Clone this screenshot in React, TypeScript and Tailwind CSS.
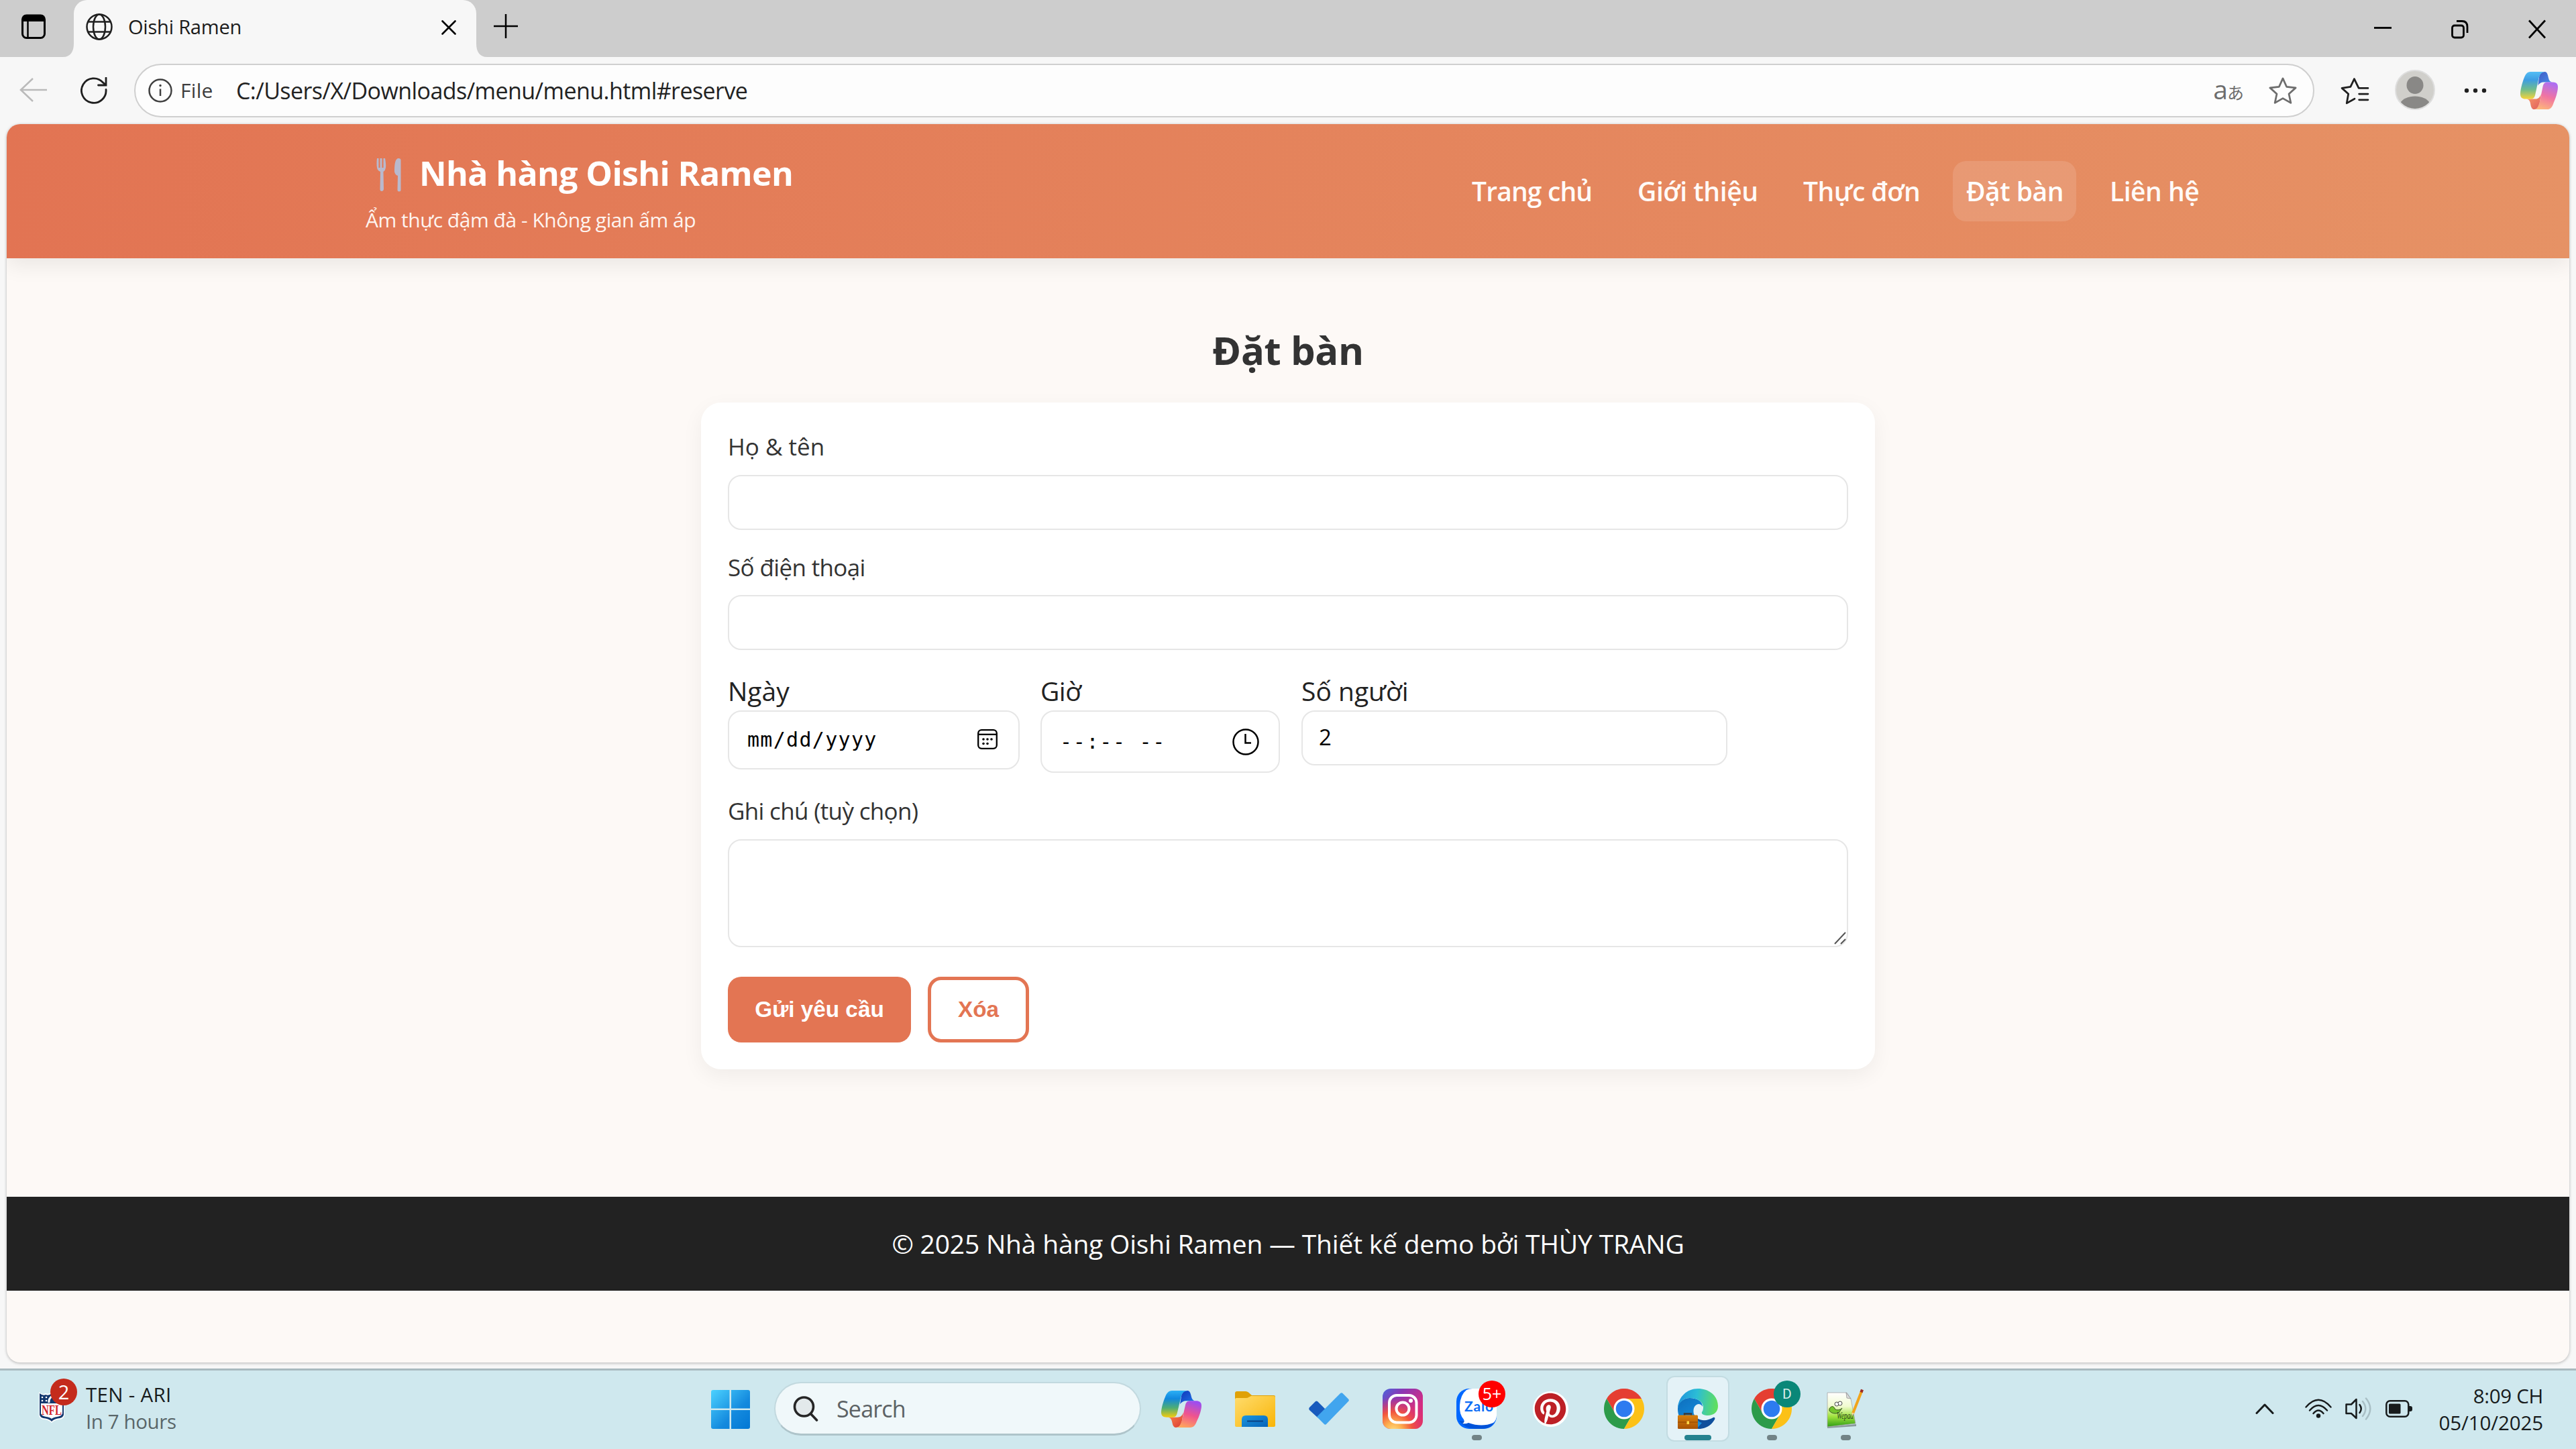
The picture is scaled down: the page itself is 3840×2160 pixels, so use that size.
import type { ReactNode } from "react";
import { FaPinterest } from "react-icons/fa";

const NAV = [
  { label: "Trang chủ", cls: "w-[177px] tracking-[-0.85px]" },
  { label: "Giới thiệu", cls: "w-[177px] tracking-[-0.4px]" },
  { label: "Thực đơn", cls: "w-[173px] tracking-[-0.55px]" },
  { label: "Đặt bàn", cls: "w-[144px] tracking-[-0.5px]", active: true },
  { label: "Liên hệ", cls: "w-[130px] tracking-[-0.5px]" },
];

/* ---------- icons ---------- */

function Copilot({ className, id }: { className: string; id: string }) {
  return (
    <svg viewBox="0 0 60 54" preserveAspectRatio="none" className={className}>
      <defs>
        <linearGradient id={`${id}a`} x1="0" y1="0" x2="0" y2="1">
          <stop offset="0" stopColor="#2cb0f5" />
          <stop offset="0.3" stopColor="#1188de" />
          <stop offset="0.65" stopColor="#4fae73" />
          <stop offset="1" stopColor="#f6cb0c" />
        </linearGradient>
        <linearGradient id={`${id}b`} x1="0" y1="0" x2="1" y2="1">
          <stop offset="0" stopColor="#1133b8" />
          <stop offset="1" stopColor="#1f7cec" />
        </linearGradient>
        <linearGradient id={`${id}c`} x1="0.6" y1="0" x2="0.3" y2="1">
          <stop offset="0" stopColor="#9d4df0" />
          <stop offset="0.5" stopColor="#f0548d" />
          <stop offset="1" stopColor="#ffa75c" />
        </linearGradient>
        <linearGradient id={`${id}d`} x1="0" y1="0" x2="1" y2="1">
          <stop offset="0" stopColor="#ff8a4a" />
          <stop offset="1" stopColor="#d93a36" />
        </linearGradient>
      </defs>
      <path d="M30 8C31 3 34 0 39 0C43 0 44 5 45 9C46 13 48 15 52 15H38C33 15 30 17 28 20Z" fill={`url(#${id}b)`} />
      <path d="M14 39H24C29 39 31 37 33 32L31 44C29 51 27 54 22 54C18 54 17 50 16 45C15 41 13 39 9 39Z" fill={`url(#${id}d)`} />
      <path d="M39 0H16C11 0 8 4 6 9C3 16 0 26 0 32C0 37 3 39 8 39H17C21 39 23 37 24 32L29 11C31 4 33 1 39 0Z" fill={`url(#${id}a)`} />
      <path d="M22 54H43C49 54 51 50 53 45C57 37 60 28 60 22C60 17 57 15 52 15H43C39 15 37 17 36 21L31 43C29 50 27 54 22 54Z" fill={`url(#${id}c)`} />
    </svg>
  );
}

function Chrome({ className }: { className: string }) {
  return (
    <svg viewBox="0 0 60 60" className={className}>
      <path d="M4 15A30 30 0 0 1 56 15H30L17 37.5Z" fill="#e53e32" />
      <path d="M4 15A30 30 0 0 0 30 60L43 37.5A15 15 0 0 1 17 37.5Z" fill="#2c9b4a" />
      <path d="M56 15A30 30 0 0 1 30 60L43 37.5A15 15 0 0 0 30 15Z" fill="#fcc117" />
      <circle cx="30" cy="30" r="15.5" fill="#fff" />
      <circle cx="30" cy="30" r="12.3" fill="#2d7bf0" />
    </svg>
  );
}

function Edge() {
  return (
    <svg viewBox="0 0 60 60" className="size-[60px]">
      <defs>
        <linearGradient id="edgeTop" x1="0" y1="0.4" x2="1" y2="0.5">
          <stop offset="0" stopColor="#1f94dc" />
          <stop offset="0.45" stopColor="#2bbdd6" />
          <stop offset="1" stopColor="#62e05a" />
        </linearGradient>
        <linearGradient id="edgeMid" x1="0" y1="0" x2="0.6" y2="1">
          <stop offset="0" stopColor="#0f6fbd" />
          <stop offset="1" stopColor="#1490df" />
        </linearGradient>
        <linearGradient id="edgeBag" x1="0" y1="0" x2="0" y2="1">
          <stop offset="0" stopColor="#d77f0c" />
          <stop offset="1" stopColor="#a75204" />
        </linearGradient>
      </defs>
      <path d="M24 38C28 48 42 50 53 43C55 42 56 44 55 46C50 55 41 60 31 60C20 60 12 52 14 40Z" fill="#0f4f9c" />
      <path d="M0 30C0 21 8 14 18 14C29 14 37 19 37 27C35 23 31 22 28 24C23 27 23 33 24 38C26 46 32 50 36 51L28 60C12 60 0 47 0 30Z" fill="url(#edgeMid)" />
      <path d="M0 29C1 12 14 0 30 0C48 0 60 12 60 26C60 35 53 40 45 40C38 40 35 38 36 35C38 32 38 30 38 27C37 19 29 14 18 14C9 14 2 20 0 29Z" fill="url(#edgeTop)" />
      <path d="M10 40V37.500H20V40" fill="none" stroke="#3a3a3a" strokeWidth="2.500" />
      <rect x="0" y="39.500" width="30" height="20.500" rx="1.500" fill="url(#edgeBag)" />
      <path d="M0 50H30" stroke="#8d4503" strokeWidth="1" />
      <rect x="13.500" y="48.500" width="3.500" height="4.500" fill="#ffd84a" />
    </svg>
  );
}

function Folder() {
  return (
    <svg viewBox="0 0 60 53" className="h-[53px] w-[60px]">
      <defs>
        <linearGradient id="fold" x1="0" y1="0" x2="1" y2="1">
          <stop offset="0" stopColor="#ffdc6d" />
          <stop offset="1" stopColor="#f9b508" />
        </linearGradient>
        <linearGradient id="foldBlue" x1="0" y1="0" x2="1" y2="1">
          <stop offset="0" stopColor="#1a97e0" />
          <stop offset="1" stopColor="#0862b8" />
        </linearGradient>
      </defs>
      <path d="M0 14V3Q0 0 3 0H16Q18 0 20 1.500L25 6H58Q60 6 60 8V14Z" fill="#e0a106" />
      <path d="M0 12Q0 10 2 10H16Q19 10 21 8.500L24 7H58Q60 7 60 9V51Q60 53 58 53H2Q0 53 0 51Z" fill="url(#fold)" />
      <path d="M10 53V42Q10 36 16 36H43Q49 36 49 42V53Z" fill="url(#foldBlue)" />
      <path d="M18 44.500H42" stroke="#0a4284" strokeWidth="2" />
    </svg>
  );
}

function Todo() {
  return (
    <svg viewBox="0 0 60 48" className="h-[48px] w-[60px]">
      <path d="M1 22L10 13Q11.500 12 13 13L25 25L13 37L1 26Q-0.500 24 1 22Z" fill="#185abd" />
      <path d="M12 36L47 1Q49 -0.500 50.500 1L59 9.500Q60.500 11 59 13L26 47Q24.500 48.500 23 47Z" fill="#41a5ee" />
    </svg>
  );
}

function Instagram() {
  return (
    <svg viewBox="0 0 60 60" className="size-[60px]">
      <defs>
        <linearGradient id="igBase" x1="0" y1="0" x2="1" y2="0.9">
          <stop offset="0" stopColor="#4a66dc" />
          <stop offset="0.3" stopColor="#8a37b5" />
          <stop offset="0.7" stopColor="#d22c84" />
          <stop offset="1" stopColor="#e0306c" />
        </linearGradient>
        <radialGradient id="igWarm" cx="0.27" cy="1.05" r="0.85">
          <stop offset="0" stopColor="#ffdd80" />
          <stop offset="0.25" stopColor="#fdb04f" />
          <stop offset="0.55" stopColor="#f2563d" />
          <stop offset="1" stopColor="#e0306c" stopOpacity="0" />
        </radialGradient>
      </defs>
      <rect width="60" height="60" rx="12" fill="url(#igBase)" />
      <rect width="60" height="60" rx="12" fill="url(#igWarm)" />
      <rect x="10" y="10" width="40.500" height="40.500" rx="11" fill="none" stroke="#fff" strokeWidth="4" />
      <circle cx="30" cy="30" r="9.500" fill="none" stroke="#fff" strokeWidth="4" />
      <circle cx="42" cy="18" r="3" fill="#fff" />
    </svg>
  );
}

function Zalo() {
  return (
    <svg viewBox="0 0 60 60" className="size-[60px]">
      <rect width="60" height="60" rx="19" fill="#0068ff" />
      <path d="M4 48Q14 60 28 60H38Q52 60 57 49Z" fill="#0053d9" />
      <path d="M15 2Q19 0 24 0H41Q60 0 60 19V40Q60 47 55 51Q38 58 18 51Q14 53 9 52Q13 50 11 46Q4 38 5 25Q6 9 15 2Z" fill="#fff" />
      <text x="12" y="34" textLength="43" fontFamily="Lato, sans-serif" fontWeight="700" fontSize="21" fill="#0a6cf5">Zalo</text>
    </svg>
  );
}

function Notepad() {
  return (
    <svg viewBox="0 0 60 60" className="size-[60px]">
      <defs>
        <linearGradient id="npp" x1="0" y1="0" x2="0" y2="1">
          <stop offset="0" stopColor="#ffffff" />
          <stop offset="0.4" stopColor="#f1fbd0" />
          <stop offset="0.7" stopColor="#9fe23c" />
          <stop offset="1" stopColor="#2f9d16" />
        </linearGradient>
      </defs>
      <path d="M3 57L46 53V56L3 59Z" fill="#8b9a9d" />
      <path d="M3 6H32L38 15L45 52L3 57Z" fill="url(#npp)" stroke="#a5a5a5" strokeWidth="0.800" />
      <path d="M31 6L32 14L38 15Z" fill="#dcdcdc" stroke="#888" strokeWidth="0.700" />
      <path d="M6 30C9 25 13 26 14 30C17 33 22 32 25 29L20 36C15 38 9 37 6 33Z" fill="#74c42c" stroke="#2c4a17" strokeWidth="0.900" />
      <circle cx="17" cy="23" r="3" fill="#fff" stroke="#333" strokeWidth="0.900" />
      <circle cx="22" cy="22" r="3" fill="#fff" stroke="#333" strokeWidth="0.900" />
      <text x="17" y="45" textLength="25" lengthAdjust="spacingAndGlyphs" fontFamily="Liberation Serif, serif" fontStyle="italic" fontSize="14" fill="#27401a">Wepad</text>
      <path d="M41 37L54 4" stroke="#f1a51b" strokeWidth="4" />
      <path d="M53.500 5.500L55 1.500" stroke="#9c2a22" strokeWidth="4.200" />
      <path d="M39.500 41L39.800 35.500L43 36.800Z" fill="#f3d5a0" />
    </svg>
  );
}

function Nfl() {
  return (
    <svg viewBox="0 0 40 48" className="h-[48px] w-[40px]">
      <path d="M1 1Q6 6 11 3Q16 5 20 1Q24 5 29 3Q34 6 39 1V36Q38 42 30 42Q24 43 20 47Q16 43 10 42Q2 42 1 36Z" fill="#fff" />
      <path d="M2 3Q7 7 11 5Q16 7 20 3Q24 7 29 5Q33 7 38 3V35Q37 40 29 40.500Q23 41.500 20 45Q17 41.500 11 40.500Q3 40 2 35Z" fill="#13386e" />
      <path d="M4 18H36V33Q35 37 28 38Q22 39 20 41Q18 39 12 38Q5 37 4 33Z" fill="#fff" />
      <g fill="#fff">
        <circle cx="6" cy="9" r="1.300" />
        <circle cx="12" cy="9" r="1.300" />
        <circle cx="6" cy="14" r="1.300" />
        <circle cx="12" cy="14" r="1.300" />
      </g>
      <path d="M16 17Q15 11 21 7" stroke="#fff" strokeWidth="3" fill="none" />
      <text x="5" y="34.500" textLength="30" lengthAdjust="spacingAndGlyphs" fontFamily="Liberation Serif, serif" fontWeight="700" fontSize="20" fill="#d21f2b">NFL</text>
    </svg>
  );
}

/* ---------- browser chrome ---------- */

function TabStrip() {
  return (
    <div className="flex h-[85px] shrink-0 bg-[#cdcdcd]">
      <div className="flex w-[94px] items-start pl-[32px] pt-[21px]">
        <svg viewBox="0 0 36 37" className="h-[37px] w-[36px]">
          <rect x="1.500" y="2" width="33" height="33.500" rx="6" fill="none" stroke="#000" strokeWidth="3" />
          <path d="M1 11V7Q1 1 7 1H29Q35 1 35 7V11Z" fill="#000" />
          <path d="M9.500 10V35" stroke="#000" strokeWidth="2.500" />
        </svg>
      </div>
      <svg viewBox="0 0 16 20" className="h-[20px] w-[16px] self-end">
        <path d="M16 0V20H0C11 20 16 12 16 0Z" fill="#f7f7f7" />
      </svg>
      <div className="flex w-[600px] items-start rounded-t-[20px] bg-[#f7f7f7] pl-[18px] pt-[20px]">
        <svg viewBox="0 0 40 40" className="size-[40px]" fill="none" stroke="#1f1f1f" strokeWidth="2.500">
          <circle cx="20" cy="20" r="18.500" />
          <ellipse cx="20" cy="20" rx="9" ry="18.500" />
          <path d="M3 12.500H37M3 27.500H37" />
        </svg>
        <span className="ml-[23px] w-[467px] text-[29px] leading-[40px] tracking-[-0.2px] text-[#1b1b1b]">Oishi Ramen</span>
        <svg viewBox="0 0 22 22" className="mt-[10px] size-[22px]" stroke="#000" strokeWidth="2.600" strokeLinecap="round">
          <path d="M1.500 1.500L20.500 20.500M20.500 1.500L1.500 20.500" />
        </svg>
      </div>
      <svg viewBox="0 0 16 20" className="h-[20px] w-[16px] self-end">
        <path d="M0 0V20H16C5 20 0 12 0 0Z" fill="#f7f7f7" />
      </svg>
      <svg viewBox="0 0 36 36" className="ml-[10px] mt-[21px] size-[36px]" stroke="#000" strokeWidth="2.500">
        <path d="M18 0V36M0 18H36" />
      </svg>
      <div className="ml-auto flex pr-[45px] pt-[29px]">
        <svg viewBox="0 0 26 26" className="size-[26px]">
          <path d="M0 12.500H26" stroke="#000" strokeWidth="2.800" />
        </svg>
        <svg viewBox="0 0 26 29" className="ml-[89px] h-[29px] w-[26px]" fill="none" stroke="#000" strokeWidth="2.800">
          <rect x="1.500" y="9" width="17" height="18" rx="3.500" />
          <path d="M8 2.500H16Q24 2.500 24 11V20" />
        </svg>
        <svg viewBox="0 0 26 29" className="ml-[89px] h-[29px] w-[26px]" stroke="#000" strokeWidth="2.800">
          <path d="M1 1.500L25 27.500M25 1.500L1 27.500" />
        </svg>
      </div>
    </div>
  );
}

const STAR = "M20 1.800L25.300 13.600L38.200 15.100L28.600 23.800L31.300 36.500L20 30.100L8.700 36.500L11.400 23.800L1.800 15.100L14.700 13.600Z";

function Toolbar() {
  return (
    <div className="flex h-[100px] shrink-0 items-start pl-[29px] pt-[10px]">
      <svg viewBox="0 0 41 36" className="mt-[21px] h-[36px] w-[41px]" fill="none" stroke="#bababa" strokeWidth="2.500">
        <path d="M20 1L2 18L20 35M2 18H41" />
      </svg>
      <svg viewBox="0 0 40 40" className="ml-[50px] mt-[20px] size-[40px]" fill="none" stroke="#1f1f1f" strokeWidth="2.800" strokeLinecap="round">
        <path d="M38 18.500A18.300 18.300 0 1 1 33.500 8L38 11.800M38 1V12H26.500" />
      </svg>
      <div className="ml-[40px] flex h-[80px] w-[3250px] items-center rounded-full border-[2px] border-[#cfcfcf] bg-[#fdfdfd] pl-[19px] pr-[24px]">
        <svg viewBox="0 0 36 36" className="size-[36px]" fill="none" stroke="#404040" strokeWidth="2.500">
          <circle cx="18" cy="18" r="16.500" />
          <path d="M18 15.500V26" />
          <circle cx="18" cy="10.500" r="1" fill="#404040" strokeWidth="1.500" />
        </svg>
        <span className="ml-[12px] w-[83px] text-[30px] leading-[40px] tracking-[0.3px] text-[#3d3d3d]">File</span>
        <span className="text-[34px] leading-[40px] tracking-[-0.56px] text-[#222]">C:/Users/X/Downloads/menu/menu.html#reserve</span>
        <span className="ml-auto flex items-baseline text-[#6d6d6d]">
          <span className="text-[39px] leading-[44px]">a</span>
          <span className="-ml-[1px] font-['Noto_Sans_CJK_JP',sans-serif] text-[25px] leading-[44px]">あ</span>
        </span>
        <svg viewBox="0 0 40 39" className="ml-[37px] h-[41px] w-[42px]" fill="none" stroke="#6d6d6d" strokeWidth="2.600" strokeLinejoin="round">
          <path d={STAR} />
        </svg>
      </div>
      <svg viewBox="0 0 42 40" className="ml-[39px] mt-[20px] h-[42px] w-[43px]" fill="none" stroke="#1f1f1f" strokeWidth="2.700" strokeLinejoin="round" strokeLinecap="round">
        <path d="M40 15.500H26.500L20 2L14.500 13.600L2 15.500L11.400 24L9 37.500L20.500 31" />
        <path d="M27 24H40M27 32.500H40" />
      </svg>
      <div className="ml-[38px] mt-[9px] size-[60px] overflow-hidden rounded-full border-2 border-[#dedede] bg-[#d0cfcb]">
        <svg viewBox="0 0 56 56" className="size-[56px]" fill="#898886">
          <ellipse cx="28" cy="21" rx="12.500" ry="13" />
          <path d="M6 48C12 34 44 34 50 48L40 56H16Z" />
        </svg>
      </div>
      <svg viewBox="0 0 34 8" className="ml-[43px] mt-[36px] h-[8px] w-[34px]" fill="#1f1f1f">
        <circle cx="4" cy="4" r="3.200" />
        <circle cx="17" cy="4" r="3.200" />
        <circle cx="30" cy="4" r="3.200" />
      </svg>
      <Copilot id="cpTop" className="ml-[50px] mt-[12px] h-[56px] w-[56px] opacity-80" />
    </div>
  );
}

/* ---------- restaurant page ---------- */

function SiteHeader() {
  return (
    <header className="flex h-[200px] shrink-0 items-start bg-linear-to-r from-[#e27453] to-[#e69265] px-[535px] shadow-[0_10px_30px_rgba(0,0,0,0.08)]">
      <div className="pt-[38px] text-white">
        <div className="flex h-[70px]">
          <svg viewBox="0 0 37 50" className="ml-[16px] mt-[13px] h-[50px] w-[37px]" fill="#b9b9cd">
            <path d="M1 0H3.500V14H5.500V0H8.500V14H10.500V0H13C14 6 14.500 10 14 14Q13.500 18 10.500 20L11 46Q10.500 49 8 49Q5.500 49 5.500 46L6 20Q1.500 18 1 14Q0 8 1 0Z" />
            <path d="M36.500 3V47Q36.500 49.500 34 49.500Q31.500 49.500 31.500 47L32 26Q26.500 24 27 18Q27 0 33 0Q36.500 0 36.500 3Z" />
          </svg>
          <h1 className="ml-[27px] text-[50px] font-bold leading-[70px] tracking-[-0.62px]">Nhà hàng Oishi Ramen</h1>
        </div>
        <p className="mt-[11px] text-[30px] leading-[48px] tracking-[-0.48px] text-[#fef4ef]">Ẩm thực đậm đà - Không gian ấm áp</p>
      </div>
      <nav className="ml-auto flex gap-[30px] pt-[55px]">
        {NAV.map((n) => (
          <a
            key={n.label}
            className={
              n.active
                ? "h-[90px] rounded-[20px] bg-white/12 px-[20px] text-[39px] font-semibold leading-[90px] text-white"
                : "h-[90px] px-[20px] text-[39px] font-semibold leading-[90px] text-[#fffaf7]"
            }
          >
            <span className={`block whitespace-nowrap ${n.cls}`}>{n.label}</span>
          </a>
        ))}
      </nav>
    </header>
  );
}

function BookingForm() {
  return (
    <form className="mx-auto mt-[38px] flex h-[994px] w-[1750px] shrink-0 flex-col rounded-[30px] bg-white px-[40px] shadow-[0_10px_32px_rgba(0,0,0,0.055)]">
      <label className="mt-[41px] text-[35px] leading-[50px] text-[#333]">Họ &amp; tên</label>
      <input className="mt-[17px] h-[82px] shrink-0 rounded-[20px] border-2 border-[#e6e6e6]" />
      <label className="mt-[31px] text-[35px] leading-[50px] tracking-[-0.65px] text-[#333]">Số điện thoại</label>
      <input className="mt-[16px] h-[82px] shrink-0 rounded-[20px] border-2 border-[#e6e6e6]" />

      <div className="mt-[36px] flex h-[147px] shrink-0 items-start text-[39px] leading-[50px] text-[#222]">
        <div className="w-[435px]">
          <label className="block">Ngày</label>
          <div className="mt-[4px] flex h-[88px] items-center rounded-[20px] border-2 border-[#e6e6e6] pl-[27px] pr-[31px] font-['DejaVu_Sans_Mono',monospace] text-[30px] text-black">
            <span className="tracking-[1.3px]">mm/dd/yyyy</span>
            <svg viewBox="0 0 30 30" className="ml-auto size-[30px] -translate-y-px" fill="none" stroke="#000" strokeWidth="2.300">
              <rect x="1.200" y="1.200" width="27.600" height="27.600" rx="5" />
              <path d="M1 7.800H29" />
              <g fill="#000" stroke="none">
                <circle cx="9" cy="15" r="1.800" />
                <circle cx="15" cy="15" r="1.800" />
                <circle cx="21" cy="15" r="1.800" />
                <circle cx="9" cy="21.500" r="1.800" />
                <circle cx="15" cy="21.500" r="1.800" />
              </g>
            </svg>
          </div>
        </div>
        <div className="ml-[31px] w-[357px]">
          <label className="block tracking-[-0.5px]">Giờ</label>
          <div className="mt-[4px] flex h-[93px] items-center rounded-[20px] border-2 border-[#e6e6e6] pl-[27px] pr-[29px] font-['DejaVu_Sans_Mono',monospace] text-[30px] text-black">
            <span className="whitespace-pre tracking-[1.700px]">--:-- --</span>
            <svg viewBox="0 0 40 40" className="ml-auto size-[40px]" fill="none" stroke="#000" strokeWidth="2.500">
              <circle cx="20" cy="20" r="18.500" />
              <path d="M19.500 8V21.500H28" />
            </svg>
          </div>
        </div>
        <div className="ml-[32px] w-[635px]">
          <label className="block">Số người</label>
          <input
            defaultValue="2"
            className="mt-[4px] block h-[82px] w-full rounded-[20px] border-2 border-[#e6e6e6] pb-[4px] pl-[24px] text-[33px] text-black"
          />
        </div>
      </div>

      <label className="mt-[32px] text-[35px] leading-[50px] tracking-[-0.68px] text-[#333]">Ghi chú (tuỳ chọn)</label>
      <div className="relative mt-[17px] h-[161px] shrink-0">
        <textarea className="block size-full resize-none rounded-[20px] border-2 border-[#e6e6e6]" />
        <svg viewBox="0 0 18 19" className="absolute bottom-[4px] right-[3px] h-[19px] w-[18px]" stroke="#555" strokeWidth="2">
          <path d="M1 18L17 1M10 18L17 11" />
        </svg>
      </div>

      <div className="mt-[44px] flex gap-[25px] font-['Liberation_Sans',Arial,sans-serif] text-[33.300px] font-bold">
        <button type="button" className="h-[98px] w-[273px] whitespace-nowrap rounded-[20px] bg-[#e37553] text-white">Gửi yêu cầu</button>
        <button type="button" className="h-[98px] w-[151px] rounded-[20px] border-[5px] border-[#e37553] text-[#e37553]">Xóa</button>
      </div>
    </form>
  );
}

function Page() {
  return (
    <div className="mx-[10px] flex h-[1846px] shrink-0 flex-col overflow-hidden rounded-[20px] bg-[#fdf9f6] shadow-[0_1px_4px_rgba(0,0,0,0.28)]">
      <SiteHeader />
      <h2 className="mt-[97px] text-center text-[58px] font-bold leading-[80px] tracking-[-0.4px] text-[#333]">Đặt bàn</h2>
      <BookingForm />
      <footer className="mt-[190px] h-[140px] shrink-0 bg-[#222] text-center text-[39px] leading-[140px] tracking-[-0.2px] text-white">
        © 2025 Nhà hàng Oishi Ramen — Thiết kế demo bởi THÙY TRANG
      </footer>
    </div>
  );
}

/* ---------- taskbar ---------- */

function Slot({ children, running, active }: { children: ReactNode; running?: boolean; active?: boolean }) {
  return (
    <div className="relative flex h-[114px] w-[110px] items-center justify-center">
      {active && <div className="absolute inset-x-[8px] bottom-[8px] top-[8px] rounded-[12px] border-2 border-[#c3dce2] bg-[#e4f2f7]" />}
      <div className="relative">{children}</div>
      {running && <div className="absolute bottom-[10px] h-[8px] w-[15px] rounded-full bg-[#728386]" />}
      {active && <div className="absolute bottom-[10px] h-[8px] w-[40px] rounded-full bg-[#25828f]" />}
    </div>
  );
}

function Taskbar() {
  return (
    <div className="flex h-[120px] shrink-0 items-start border-t-[3px] border-[#a9babf] bg-[#cfe8ee]">
      <div className="flex w-[1060px] items-start">
        <div className="relative ml-[57px] mt-[31px]">
          <Nfl />
          <div className="absolute -top-[19px] left-[18px] size-[40px] rounded-full bg-[#c42b1c] text-center text-[29px] leading-[40px] text-white">2</div>
        </div>
        <div className="ml-[31px] pt-[16px] text-[29.500px] leading-[40px]">
          <div className="tracking-[0.3px] text-[#171b1c]">TEN - ARI</div>
          <div className="tracking-[-0.4px] text-[#596669]">In 7 hours</div>
        </div>
      </div>
      <svg viewBox="0 0 58 58" className="mt-[29px] size-[58px]">
        <defs>
          <linearGradient id="win" gradientUnits="userSpaceOnUse" x1="0" y1="0" x2="58" y2="58">
            <stop offset="0" stopColor="#4cd2ff" />
            <stop offset="0.6" stopColor="#148ade" />
            <stop offset="1" stopColor="#0277d4" />
          </linearGradient>
        </defs>
        <path d="M3 0H27.500V27.500H0V3Q0 0 3 0ZM30 0H55Q58 0 58 3V27.500H30ZM0 30H27.500V58H3Q0 58 0 55ZM30 30H58V55Q58 58 55 58H30Z" fill="url(#win)" />
      </svg>
      <div className="ml-[36px] mt-[17px] flex h-[80px] w-[547px] items-center rounded-full border-2 border-b-[3px] border-[#c2d9df] border-b-[#aec4ca] bg-[#f0f8fa] pl-[26px]">
        <svg viewBox="0 0 38 38" className="size-[38px]" fill="#e3e9eb" stroke="#262626" strokeWidth="3.600" strokeLinecap="round">
          <circle cx="16.500" cy="16" r="14" />
          <path d="M27 27L35.500 36" />
        </svg>
        <span className="ml-[27px] text-[34px] leading-[44px] tracking-[-0.8px] text-[#5c6265]">Search</span>
      </div>
      <div className="ml-[5px] flex">
        <Slot><Copilot id="cpBar" className="h-[55px] w-[60px]" /></Slot>
        <Slot><Folder /></Slot>
        <Slot><Todo /></Slot>
        <Slot><Instagram /></Slot>
        <Slot running>
          <Zalo />
          <div className="absolute -top-[12px] left-[33px] size-[40px] rounded-full bg-[#f00] text-center text-[25px] leading-[39px] text-white">5+</div>
        </Slot>
        <Slot>
          <div className="flex size-[53px] items-center justify-center rounded-full bg-white">
            <FaPinterest className="size-[48px] text-[#bd2026]" />
          </div>
        </Slot>
        <Slot><Chrome className="size-[60px]" /></Slot>
        <Slot active><Edge /></Slot>
        <Slot running>
          <Chrome className="size-[60px]" />
          <div className="absolute -top-[12px] left-[33px] size-[40px] rounded-full bg-[#0a8778] text-center font-['Roboto',sans-serif] text-[21px] leading-[40px] text-[#d5ebe8]">D</div>
        </Slot>
        <Slot running><Notepad /></Slot>
      </div>
      <div className="ml-auto flex h-[114px] items-center pr-[49px]">
        <svg viewBox="0 0 28 18" className="h-[18px] w-[28px]" fill="none" stroke="#171b1c" strokeWidth="3" strokeLinecap="round" strokeLinejoin="round">
          <path d="M2 15.500L14 3L26 15.500" />
        </svg>
        <svg viewBox="0 0 40 30" className="ml-[46px] h-[30px] w-[40px]" fill="none" stroke="#171b1c" strokeWidth="2.400" strokeLinecap="round">
          <path d="M1.500 12.500Q20 -9 38.500 12.500M7 17.500Q20 2.500 33 17.500M12.500 22Q20 13 27.500 22" />
          <circle cx="20" cy="25.500" r="3.200" fill="#171b1c" stroke="none" />
        </svg>
        <svg viewBox="0 0 40 34" className="ml-[20px] h-[34px] w-[40px]" fill="none" strokeWidth="2.500" strokeLinecap="round" strokeLinejoin="round">
          <path d="M1.500 10.500H9L16.500 3V31L9 24H1.500Z" stroke="#171b1c" />
          <path d="M21.500 11Q26 17 21.500 23" stroke="#171b1c" />
          <path d="M26 6Q34.500 17 26 28M31 1.500Q43.500 17 31 32.500" stroke="#a9bfc5" />
        </svg>
        <svg viewBox="0 0 40 26" className="ml-[20px] h-[26px] w-[40px]">
          <rect x="1.300" y="1.300" width="33" height="23.400" rx="5.500" fill="none" stroke="#171b1c" strokeWidth="2.500" />
          <rect x="5" y="5.500" width="17.500" height="15" rx="1.500" fill="#171b1c" />
          <path d="M35 9H37Q40 9 40 12V14Q40 17 37 17H35Z" fill="#171b1c" />
        </svg>
        <div className="w-[195px] pt-px text-right text-[29.500px] leading-[40px] text-[#171b1c]">
          <div className="tracking-[-0.3px]">8:09 CH</div>
          <div className="tracking-[-0.1px]">05/10/2025</div>
        </div>
      </div>
    </div>
  );
}

export default function App() {
  return (
    <div className="flex h-[2160px] w-[3840px] flex-col overflow-hidden bg-[#f7f7f7] font-['Open_Sans',sans-serif]">
      <div className="flex h-[2040px] shrink-0 flex-col">
        <TabStrip />
        <Toolbar />
        <Page />
      </div>
      <Taskbar />
    </div>
  );
}
